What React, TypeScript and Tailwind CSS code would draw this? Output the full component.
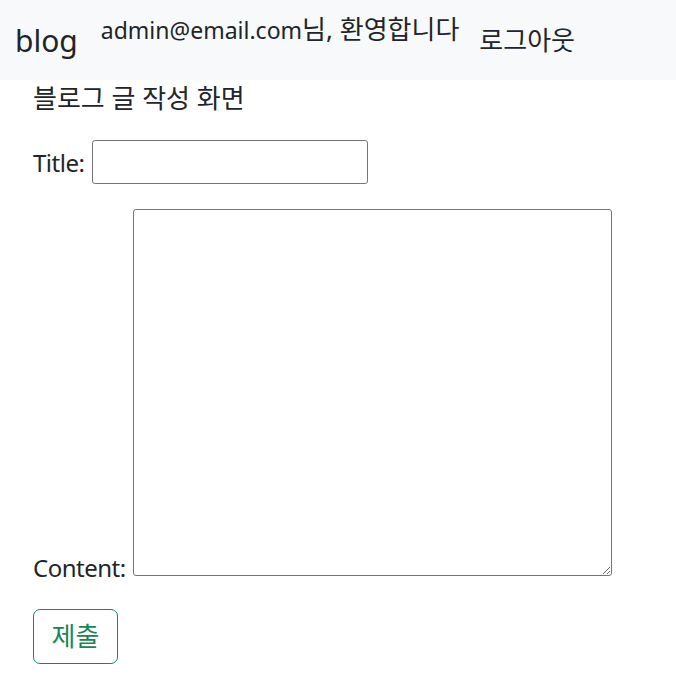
import React from 'react';

const font = { fontFamily: '"Noto Sans", "Noto Sans CJK KR", sans-serif' };

// Hangul runs are set slightly larger so Noto CJK matches the reference's wider glyphs
const K: React.FC<{ children: React.ReactNode }> = ({ children }) => (
  <span className="text-[26px]">{children}</span>
);

export default function App() {
  return (
    <div className="min-h-screen bg-white text-[#212529] text-[24px] leading-[36px]" style={font}>
      {/* Navbar */}
      <nav className="flex h-[80px] items-start bg-[#f8f9fa] pl-[15px]">
        <a href="#" className="mt-[18px] text-[30px] leading-[45px]">blog</a>
        <span className="ml-[23px] mt-[11px] h-[36px]">
          <span className="text-[23px]">admin@email.com</span><K>님, 환영합니다</K>
        </span>
        <a href="#" className="ml-[20px] mt-[22px] h-[36px]"><K>로그아웃</K></a>
      </nav>

      {/* Write form */}
      <main className="px-[33px]">
        <h1 className="h-[36px] text-[24px] leading-[36px]"><K>블로그 글 작성 화면</K></h1>
        <form className="mt-[24px] flex flex-col">
          <div className="flex items-baseline">
            <label htmlFor="title" className="w-[59px] tracking-[-0.5px]">Title:</label>
            <input id="title" type="text" className="h-[44px] w-[276px] rounded-[3px] border border-[#767676] px-2 text-[24px]" />
          </div>
          <div className="mt-[25px] flex items-end">
            <label htmlFor="content" className="-mb-[10px] w-[100px] tracking-[-0.5px]">Content:</label>
            <textarea id="content" className="h-[367px] w-[479px] resize rounded-[3px] border border-[#767676]" />
          </div>
          <div className="mt-[33px]">
            <button type="submit" className="h-[55px] w-[85px] rounded-[7px] border border-[#198754] text-[#198754]"><K>제출</K></button>
          </div>
        </form>
      </main>
    </div>
  );
}
